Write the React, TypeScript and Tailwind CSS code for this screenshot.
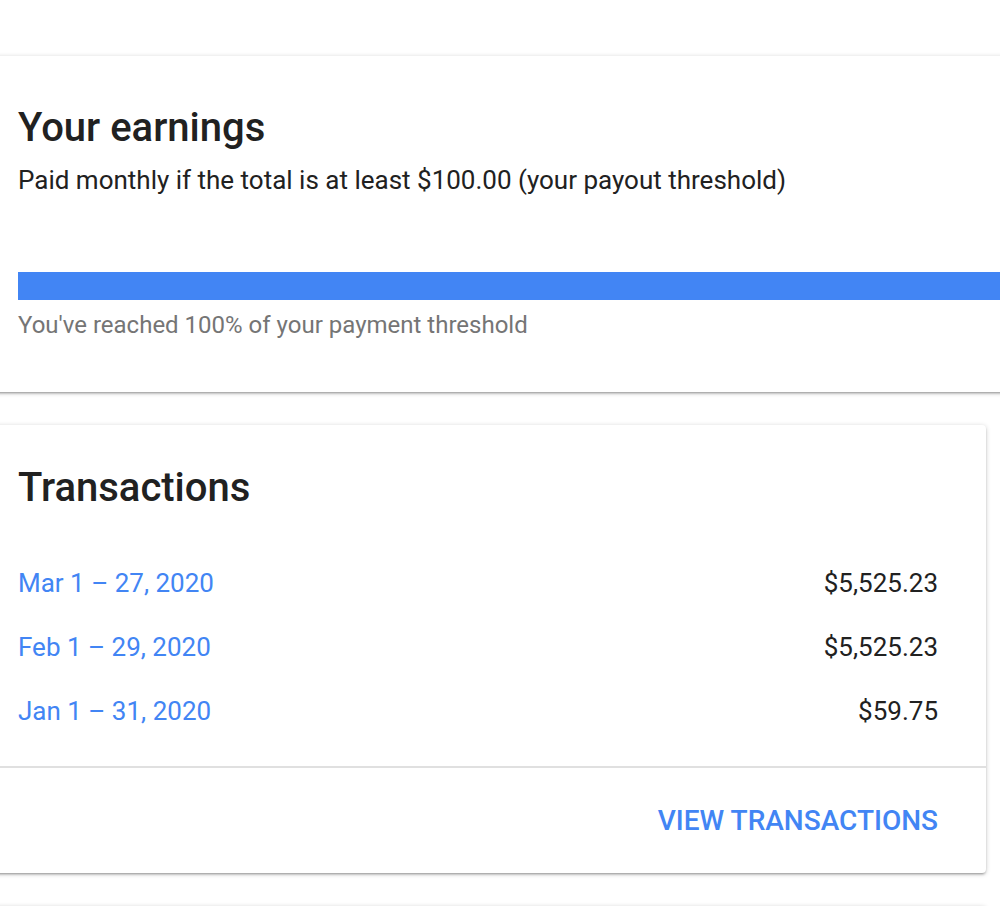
import React from 'react';

const cardShadow =
  'shadow-[0_2px_2px_0_rgba(0,0,0,0.14),0_3px_1px_-2px_rgba(0,0,0,0.12),0_1px_5px_0_rgba(0,0,0,0.2)]';

const transactions = [
  { period: 'Mar 1 – 27, 2020', amount: '$5,525.23' },
  { period: 'Feb 1 – 29, 2020', amount: '$5,525.23' },
  { period: 'Jan 1 – 31, 2020', amount: '$59.75' },
];

const App: React.FC = () => {
  return (
    <div className="w-[1000px] h-[906px] overflow-hidden bg-white font-['Roboto',sans-serif]">
      <div className="-ml-[30px] pt-[56px] flex flex-col gap-[33px]">
        {/* Earnings */}
        <div className={`w-[1080px] bg-white rounded-[4px] ${cardShadow} pl-12 pt-12 pb-[53px]`}>
          <h2 className="text-[40px] leading-[48px] font-medium text-[#212121]">Your earnings</h2>
          <p className="mt-3 text-[26px] leading-8 text-[#212121]">
            Paid monthly if the total is at least $100.00 (your payout threshold)
          </p>
          <div className="mt-[76px] h-[28px] bg-[#4285f4]" />
          <p className="mt-[11px] text-[24px] leading-7 text-[#757575]">
            You've reached 100% of your payment threshold
          </p>
        </div>

        {/* Transactions */}
        <div className={`w-[1016px] bg-white rounded-[4px] ${cardShadow}`}>
          <div className="pl-12 pr-12 pt-[39px] pb-[23px]">
            <h2 className="text-[40px] leading-[48px] font-medium text-[#212121]">Transactions</h2>
            <div className="mt-[39px]">
              {transactions.map((t) => (
                <div key={t.period} className="flex items-center justify-between py-4">
                  <a className="text-[26px] leading-8 text-[#4285f4] cursor-pointer">{t.period}</a>
                  <span className="text-[26px] leading-8 text-[#212121]">{t.amount}</span>
                </div>
              ))}
            </div>
          </div>
          <div className="border-t-2 border-[#e0e0e0] flex justify-end pr-12 pt-[37px] pb-[36px]">
            <button className="text-[28px] leading-8 font-medium uppercase text-[#4285f4]">View transactions</button>
          </div>
        </div>

        <div className={`w-[1016px] h-[200px] bg-white rounded-[4px] ${cardShadow}`} />
      </div>
    </div>
  );
};

export default App;
